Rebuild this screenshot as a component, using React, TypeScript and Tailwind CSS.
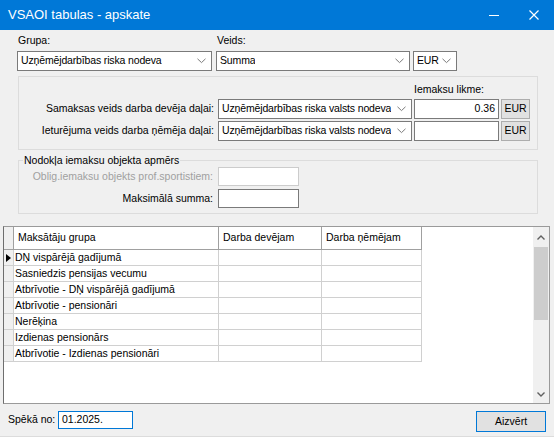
import React from "react"

const Chevron: React.FC = () => (
	<svg width="9" height="6" viewBox="0 0 9 6" className="shrink-0">
		<polyline points="0.5,0.8 4.5,4.6 8.5,0.8" fill="none" stroke="#7a7a7a" strokeWidth="1" />
	</svg>
)

const Combo: React.FC<{ value: string; className: string }> = ({ value, className }) => (
	<div className={`flex items-center justify-between border border-[#7a7a7a] bg-white pl-[3px] pr-[5px] ${className}`}>
		<span className="truncate tracking-[-0.15px]">{value}</span>
		<Chevron />
	</div>
)

const rows = [
	"DŅ vispārējā gadījumā",
	"Sasniedzis pensijas vecumu",
	"Atbrīvotie - DŅ vispārējā gadījumā",
	"Atbrīvotie - pensionāri",
	"Nerēķina",
	"Izdienas pensionārs",
	"Atbrīvotie - Izdienas pensionāri",
]

export default function App() {
	return (
		<div className="flex h-[437px] w-[554px] flex-col overflow-hidden bg-[#f0f0f0] text-[10.5px] text-black" style={{ fontFamily: '"Liberation Sans", Arial, sans-serif' }}>
			{/* Title bar */}
			<div className="flex h-[30px] shrink-0 items-center bg-[#0078d7] pl-[8px] text-white">
				<span className="flex-1 text-[13px]">VSAOI tabulas - apskate</span>
				<div className="flex h-full items-center">
					<div className="flex h-full w-[40px] items-center justify-center">
						<svg width="10" height="10" viewBox="0 0 10 10">
							<line x1="0" y1="5.5" x2="10" y2="5.5" stroke="white" strokeWidth="1" />
						</svg>
					</div>
					<div className="flex h-full w-[40px] items-center justify-center">
						<svg width="10" height="10" viewBox="0 0 10 10">
							<path d="M0.5 0.5 L9.5 9.5 M9.5 0.5 L0.5 9.5" stroke="white" strokeWidth="1.2" />
						</svg>
					</div>
				</div>
			</div>

			{/* Grupa / Veids */}
			<div className="flex pl-[17px]">
				<div className="flex w-[195px] flex-col">
					<div className="flex h-[21px] items-center pl-[1px]">Grupa:</div>
					<Combo value="Uzņēmējdarbības riska nodeva" className="h-[20px] w-[195px]" />
				</div>
				<div className="ml-[4px] flex w-[194px] flex-col">
					<div className="flex h-[21px] items-center pl-[1px]">Veids:</div>
					<Combo value="Summa" className="h-[20px] w-[194px]" />
				</div>
				<div className="ml-[3px] flex flex-col">
					<div className="h-[21px]" />
					<Combo value="EUR" className="h-[20px] w-[44px]" />
				</div>
			</div>

			{/* Rates group */}
			<div className="ml-[18px] mt-[5px] flex h-[74px] w-[520px] flex-col border border-[#dcdcdc]">
				<div className="flex h-[21px] items-end pl-[395px]">Iemaksu likme:</div>
				<div className="mt-[1px] flex h-[20px] items-stretch">
					<div className="flex w-[195px] items-center justify-end whitespace-nowrap">Samaksas veids darba devēja daļai:</div>
					<Combo value="Uzņēmējdarbības riska valsts nodeva" className="ml-[4px] w-[194px]" />
					<div className="ml-[2px] flex w-[85px] items-center justify-end border border-[#7a7a7a] bg-white pr-[3px]">0.36</div>
					<div className="ml-[2px] flex w-[29px] items-center justify-center border border-[#adadad] bg-[#e1e1e1]">EUR</div>
				</div>
				<div className="mt-[2px] flex h-[20px] items-stretch">
					<div className="flex w-[195px] items-center justify-end whitespace-nowrap">Ieturējuma veids darba ņēmēja daļai:</div>
					<Combo value="Uzņēmējdarbības riska valsts nodeva" className="ml-[4px] w-[194px]" />
					<div className="ml-[2px] w-[85px] border border-[#7a7a7a] bg-white" />
					<div className="ml-[2px] flex w-[29px] items-center justify-center border border-[#adadad] bg-[#e1e1e1]">EUR</div>
				</div>
			</div>

			{/* Tax object group */}
			<div className="relative ml-[18px] mt-[10px] flex h-[54px] w-[520px] flex-col border border-[#dcdcdc] pt-[6px]">
				<span className="absolute left-[4px] top-[-8px] bg-[#f0f0f0] px-[1px]">Nodokļa iemaksu objekta apmērs</span>
				<div className="flex h-[19px] items-stretch">
					<div className="flex w-[194px] items-center justify-end whitespace-nowrap text-[#a0a0a0]">Oblig.iemaksu objekts prof.sportistiem:</div>
					<div className="ml-[5px] w-[81px] border border-[#cccccc] bg-white" />
				</div>
				<div className="mt-[3px] flex h-[19px] items-stretch">
					<div className="flex w-[194px] items-center justify-end">Maksimālā summa:</div>
					<div className="ml-[5px] w-[81px] border border-[#7a7a7a] bg-white" />
				</div>
			</div>

			{/* Grid */}
			<div className="ml-[3px] mt-[12px] flex h-[178px] w-[547px] border border-[#9a9a9a] border-l-[#6e6e6e] bg-white">
				<div className="flex flex-1 flex-col">
					<div className="flex h-[23px]">
						<div className="w-[10px] border-b border-r border-[#a0a0a0] bg-[#f0f0f0]" />
						<div className="flex w-[205px] items-center border-b border-r border-[#a0a0a0] pl-[4px]">Maksātāju grupa</div>
						<div className="flex w-[103px] items-center border-b border-r border-[#a0a0a0] pl-[4px]">Darba devējam</div>
						<div className="flex w-[100px] items-center border-b border-r border-[#a0a0a0] pl-[4px]">Darba ņēmējam</div>
					</div>
					{rows.map((r, i) => (
						<div key={r} className="flex h-[16px]">
							<div className="flex w-[10px] items-center justify-center border-b border-r border-[#d0d0d0] bg-[#f0f0f0]">
								{i === 0 && (
									<svg width="5" height="8" viewBox="0 0 5 8">
										<polygon points="0,0 5,4 0,8" fill="#000" />
									</svg>
								)}
							</div>
							<div className="flex w-[205px] items-center border-b border-r border-[#d0d0d0] pl-[1px]">{r}</div>
							<div className="w-[103px] border-b border-r border-[#d0d0d0]" />
							<div className="w-[100px] border-b border-r border-[#d0d0d0]" />
						</div>
					))}
				</div>
				{/* Scrollbar */}
				<div className="flex w-[16px] flex-col bg-[#f0f0f0]">
					<div className="flex h-[20px] items-center justify-center">
						<svg width="8" height="5" viewBox="0 0 8 5">
							<polyline points="0.5,4.5 4,1 7.5,4.5" fill="none" stroke="#606060" strokeWidth="1.4" />
						</svg>
					</div>
					<div className="mx-[1px] h-[73px] bg-[#cdcdcd]" />
					<div className="flex-1" />
					<div className="flex h-[18px] items-center justify-center">
						<svg width="8" height="5" viewBox="0 0 8 5">
							<polyline points="0.5,0.5 4,4 7.5,0.5" fill="none" stroke="#606060" strokeWidth="1.4" />
						</svg>
					</div>
				</div>
			</div>

			{/* Bottom */}
			<div className="flex flex-1 items-start border-b border-[#dcdcdc] pt-[7px]">
				<div className="flex h-[18px] w-[58px] items-center pl-[8px]">Spēkā no:</div>
				<div className="flex h-[18px] w-[75px] items-center border border-[#0078d7] bg-white pl-[3px]">01.2025.</div>
				<div className="flex-1" />
				<div className="mr-[8px] flex h-[21px] w-[70px] items-center justify-center border border-[#0078d7] bg-[#e1e1e1]">Aizvērt</div>
			</div>
		</div>
	)
}
